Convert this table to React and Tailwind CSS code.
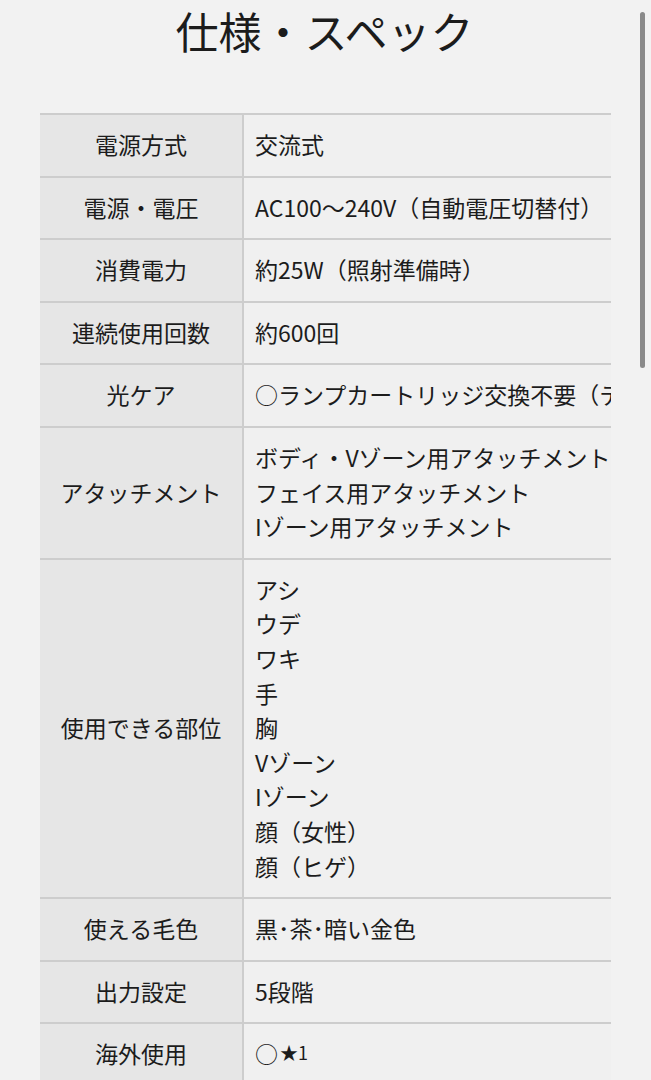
import React from "react";

const rows = [
  { label: "電源方式", value: ["交流式"] },
  { label: "電源・電圧", value: ["AC100～240V（自動電圧切替付）"] },
  { label: "消費電力", value: ["約25W（照射準備時）"] },
  { label: "連続使用回数", value: ["約600回"] },
  { label: "光ケア", value: ["○ランプカートリッジ交換不要（テクノロジー搭載）"] },
  {
    label: "アタッチメント",
    value: ["ボディ・Vゾーン用アタッチメント", "フェイス用アタッチメント", "Iゾーン用アタッチメント"],
  },
  {
    label: "使用できる部位",
    value: ["アシ", "ウデ", "ワキ", "手", "胸", "Vゾーン", "Iゾーン", "顔（女性）", "顔（ヒゲ）"],
  },
  { label: "使える毛色", value: ["黒･茶･暗い金色"] },
  { label: "出力設定", value: ["5段階"] },
  { label: "海外使用", value: null },
];

function SpecRow({ row }) {
  return (
    <div className="flex border-b-2 border-[#cdcdcd]">
      <div className="w-[204px] shrink-0 flex items-center justify-center border-r-2 border-[#cdcdcd] bg-[#e6e6e6] pt-[12px] pb-[14px] text-center">
        {row.label}
      </div>
      <div className="flex-1 bg-[#f0f0f0] pt-[12px] pb-[14px] pl-[11px] pr-4 whitespace-nowrap">
        {row.value ? (
          row.value.map((line) => <div key={line}>{line}</div>)
        ) : (
          <div>
            ○<sup className="text-[18px] relative -top-[3px] ml-[2px]">★1</sup>
          </div>
        )}
      </div>
    </div>
  );
}

export default function App() {
  return (
    <div
      className="relative min-h-[1080px] bg-[#f2f2f2] text-[#1c1c1c] overflow-hidden"
      style={{ fontFamily: '"Noto Sans CJK JP", "Noto Sans", sans-serif' }}
    >
      <h1 className="text-center text-[43px] leading-[60px] font-normal pr-[2px]">仕様・スペック</h1>

      <div className="mt-[53px] ml-[40px] w-[571px] overflow-hidden">
        <div className="w-[800px] border-t-2 border-[#cdcdcd] text-[23px] leading-[34.6px]">
          {rows.map((row) => (
            <SpecRow key={row.label} row={row} />
          ))}
        </div>
      </div>

      {/* scrollbar */}
      <div className="absolute right-[6px] top-[12px] h-[356px] w-[5px] rounded-full bg-[#8a8a8a]" />
    </div>
  );
}
